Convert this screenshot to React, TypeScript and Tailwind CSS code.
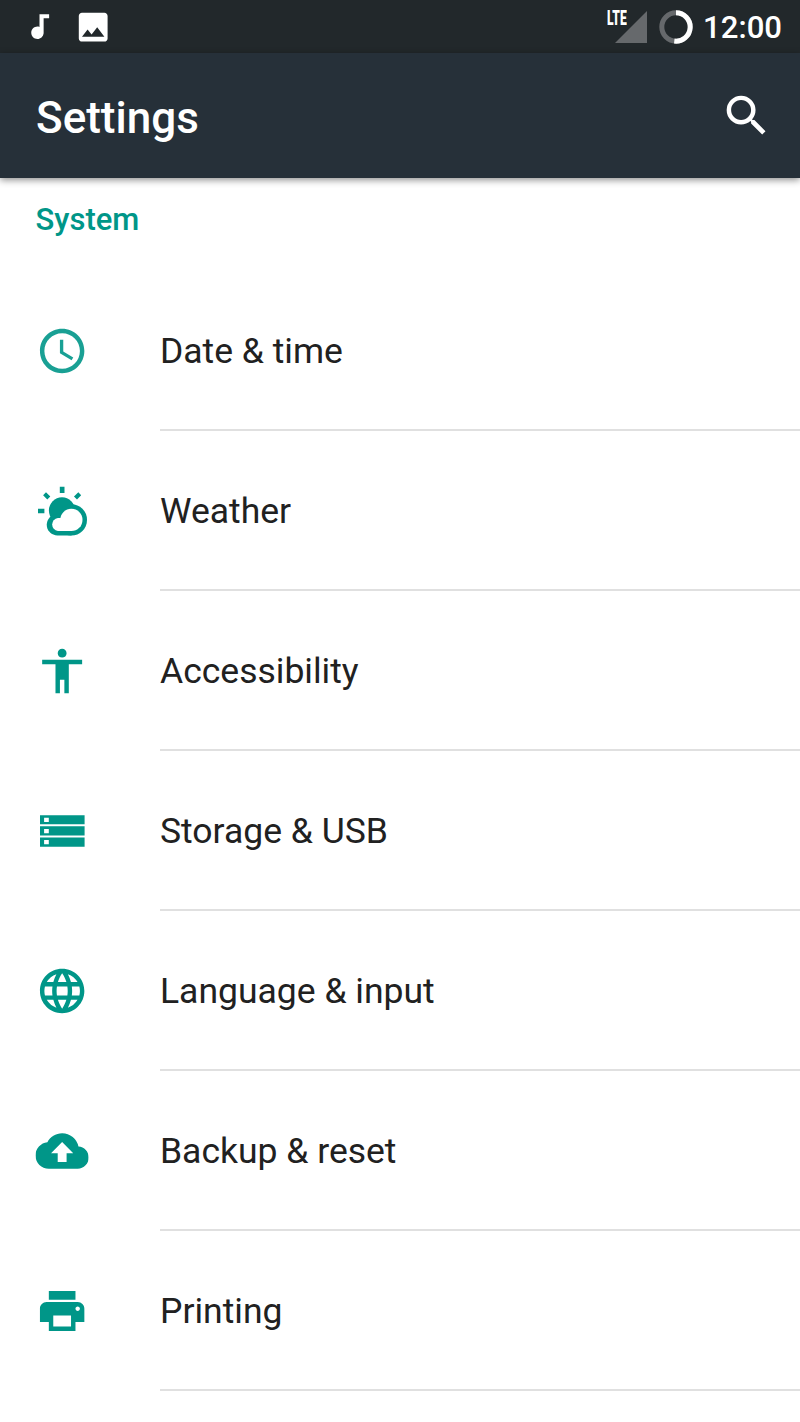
import React from 'react'
import {
    MdAccessibility,
    MdCloudUpload,
    MdLanguage,
    MdPrint,
    MdSearch,
} from 'react-icons/md'


const MusicIcon = () => (
    <svg className="w-[33px] h-[33px]" viewBox="0 0 24 24" fill="currentColor">
        <path d="M12 3v9.28c-.47-.17-.97-.28-1.5-.28C8.01 12 6 14.01 6 16.5S8.01 21 10.5 21c2.31 0 4.2-1.75 4.45-4H15V6h4V3h-7z" />
    </svg>
)

const PictureIcon = () => (
    <svg className="w-[38.4px] h-[38.4px]" viewBox="0 0 24 24" fill="currentColor">
        <path d="M21 19V5c0-1.1-.9-2-2-2H5c-1.1 0-2 .9-2 2v14c0 1.1.9 2 2 2h14c1.1 0 2-.9 2-2zM8.5 13.5l2.5 3.01L14.5 12l4.5 6H5l3.5-4.5z" />
    </svg>
)

const SignalIcon = () => (
    <svg className="w-[32px] h-[32px]" viewBox="0 0 32 32">
        <path d="M0 32L32 0V32z" fill="#66696c" />
    </svg>
)

const BatteryIcon = () => (
    <svg className="w-[34px] h-[34px]" viewBox="0 0 34 34" fill="none" strokeWidth="5">
        <circle cx="17" cy="17" r="14.2" stroke="#66696c" />
        <path d="M17 2.8A14.2 14.2 0 1 1 15.3 31.1" stroke="#fff" />
    </svg>
)

const ClockIcon = () => (
    <svg viewBox="0 0 24 24" fill="currentColor" fillOpacity="0.9">
        <path d="M11.99 2C6.47 2 2 6.48 2 12s4.47 10 9.99 10C17.52 22 22 17.52 22 12S17.52 2 11.99 2zM12 20c-4.42 0-8-3.58-8-8s3.58-8 8-8 8 3.58 8 8-3.58 8-8 8z" />
        <path d="M12.5 7H11v6l5.25 3.15.75-1.23-4.5-2.67z" />
    </svg>
)

const WeatherIcon = () => (
    <svg viewBox="35.5 484.3 53.3 53.3" fill="currentColor">
        <path d="M59.8 486.7h4.7v6.4h-4.7zM38 508.8h6.4v4.4H38z" />
        <path d="M46 492.2l4.3 4.2-3 3.1-4.2-4.3zM78.3 492.2l-4.3 4.2 3 3.1 4.2-4.3z" />
        <circle cx="62" cy="510.4" r="13.1" />
        {/* cloud */}
        <circle cx="71.4" cy="519.9" r="15.6" />
        <path d="M57.5 514a10.7 10.7 0 0 0 0 21.5H71.5V514z" />
        <g fill="#fff">
            <circle cx="71.4" cy="519.9" r="11.1" />
            <path d="M57.9 518a6.55 6.55 0 0 0 0 13H71.5V518z" />
        </g>
    </svg>
)

const StorageIcon = () => (
    <svg viewBox="35.5 804.3 53.3 53.3" fill="currentColor">
        <path d="M40 815.2h44.6v9.1H40zM40 826.2h44.6v9.3H40zM40 837.4h44.6v9.3H40z" />
        <path d="M44.1 817.8h4.7v4.3h-4.7zM44.1 828.9h4.7v4.3h-4.7zM44.1 839.9h4.7v4.3h-4.7z" fill="#fff" />
    </svg>
)

const items = [
    { title: 'Date & time', icon: <ClockIcon /> },
    { title: 'Weather', icon: <WeatherIcon /> },
    { title: 'Accessibility', icon: <MdAccessibility size="100%" /> },
    { title: 'Storage & USB', icon: <StorageIcon /> },
    { title: 'Language & input', icon: <MdLanguage size="100%" /> },
    { title: 'Backup & reset', icon: <MdCloudUpload size="100%" /> },
    { title: 'Printing', icon: <MdPrint size="100%" /> },
]

const StatusBar = () => {
    return (
        <div className="flex items-center justify-between h-[53px] bg-[#22282b] text-white pl-[22.5px] pr-[18px]">
            <div className="flex items-center gap-[18px] pt-px">
                <MusicIcon />
                <PictureIcon />
            </div>
            <div className="flex items-center">
                <div className="relative mr-[12px]">
                    <SignalIcon />
                    <span className="absolute -left-[8px] -top-[2px] text-[19.5px] leading-none font-black origin-left scale-x-[0.62]">LTE</span>
                </div>
                <BatteryIcon />
                <span className="ml-[10px] pt-[2px] text-[31.1px] leading-none font-medium">12:00</span>
            </div>
        </div>
    )
}

const App = () => {
    return (
        <div className="w-[800px] h-[1422px] overflow-hidden bg-white font-['Roboto',sans-serif]">
            <StatusBar />
            <header className="relative flex items-center justify-between h-[125px] bg-[#263039] text-white pl-9 pr-[27px] shadow-[0_2px_7px_rgba(0,0,0,0.45)]">
                <h1 className="text-[44px] leading-none font-medium pt-[5px]">Settings</h1>
                <MdSearch className="w-[53.3px] h-[53.3px]" />
            </header>

            <main className="text-[#009688]">
                <h2 className="h-[93px] pl-[35.5px] pt-[23px] text-[31px] leading-[38px] font-medium">System</h2>
                {items.map((item) => (
                    <div key={item.title} className="flex h-40 pl-[35px]">
                        <div className="flex items-center w-[125px]">
                            <div className="w-[53.3px] h-[53.3px] translate-x-[0.5px] translate-y-[0.3px]">{item.icon}</div>
                        </div>
                        <div className="flex flex-1 items-center pt-[4px] border-b-2 border-[#e0e0e0] text-[#212121] text-[35.5px]">
                            {item.title}
                        </div>
                    </div>
                ))}
            </main>
        </div>
    )
}

export default App
